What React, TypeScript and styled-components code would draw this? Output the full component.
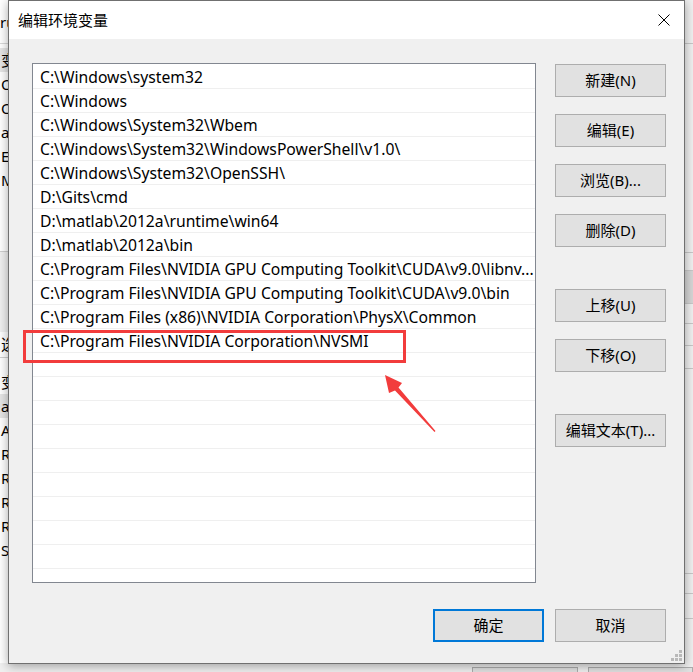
import React from "react";
import styled, { createGlobalStyle } from "styled-components";

const GlobalStyle = createGlobalStyle`
  html, body { margin: 0; padding: 0; }
  body {
    width: 693px; height: 672px; overflow: hidden; background: #f0f0f0;
    font-family: "Noto Sans", "Noto Sans CJK SC", sans-serif;
    -webkit-font-smoothing: antialiased;
  }
`;

const FONT = `"Noto Sans", "Noto Sans CJK SC", sans-serif`;

const Desktop = styled.div`
  position: relative;
  width: 693px;
  height: 672px;
  overflow: hidden;
  background: #f0f0f0;
  font-family: ${FONT};
`;

/* ---------- background window (only fringes visible) ---------- */
const BackWindow = styled.div`
  display: grid;
  grid-template-columns: 684px 9px;
  grid-template-rows: 663px 9px;
  width: 693px;
  height: 672px;
`;

const BackList = styled.div`
  display: flex;
  flex-direction: column;
  background: #ffffff;
  font-size: 15px;
  color: #000;
`;

const BackHeader = styled.div`
  height: 43px;
  border-bottom: 1px solid #d9d9d9;
  display: flex;
  align-items: center;
  padding-left: 0;
`;

const BackRow = styled.div<{ $shade?: boolean }>`
  height: 24px;
  line-height: 24px;
  padding-left: 1px;
  white-space: nowrap;
  background: ${(p) => (p.$shade ? "#e6e6e6" : "transparent")};
`;

const BackGap = styled.div<{ $h: number; $line?: boolean; $bg?: string }>`
  height: ${(p) => p.$h}px;
  border-bottom: ${(p) => (p.$line ? "1px solid #cfcfcf" : "none")};
  background: ${(p) => p.$bg || "transparent"};
`;

const BackSide = styled.div`
  display: flex;
  flex-direction: column;
  background: #f0f0f0;
`;

const SideBlock = styled.div<{ $h: number; $bg?: string; $line?: boolean }>`
  height: ${(p) => p.$h}px;
  background: ${(p) => p.$bg || "transparent"};
  border-bottom: ${(p) => (p.$line ? "1px solid #c8c8c8" : "none")};
`;

const BackFooter = styled.div`
  grid-column: 1 / span 2;
  display: flex;
  padding: 4px 0 0 472px;
  gap: 10px;
  background: #f0f0f0;
`;

const BackBtn = styled.div<{ $w: number }>`
  width: ${(p) => p.$w}px;
  height: 12px;
  border: 1px solid #adadad;
  border-bottom: none;
  background: #e1e1e1;
`;

/* ---------- dialog ---------- */
const Dialog = styled.div`
  position: absolute;
  left: 8px;
  top: 0;
  width: 677px;
  height: 664px;
  box-sizing: border-box;
  border: 1px solid #707070;
  background: #f0f0f0;
  box-shadow: 0 2px 10px rgba(0, 0, 0, 0.35);
  display: flex;
  flex-direction: column;
`;

const TitleBar = styled.div`
  height: 38px;
  flex: none;
  background: #ffffff;
  display: flex;
  align-items: center;
  justify-content: space-between;
  padding: 0 14px 0 9px;
`;

const Title = styled.span`
  font-size: 15px;
  color: #000;
  line-height: 1;
  margin-top: 1px;
`;

const Body = styled.div`
  flex: 1;
  display: flex;
  flex-direction: column;
  padding: 24px 18px 21px 23px;
`;

const Main = styled.div`
  display: flex;
  gap: 19px;
  height: 520px;
`;

const ListBox = styled.div`
  width: 504px;
  height: 520px;
  box-sizing: border-box;
  border: 1px solid #828790;
  background: #ffffff;
  overflow: hidden;
  padding-top: 1px;
`;

const Row = styled.div`
  height: 24px;
  box-sizing: border-box;
  border-bottom: 1px solid #efefef;
  padding: 1px 2px 0 7px;
  font-size: 15.7px;
  line-height: 22px;
  color: #000;
  white-space: nowrap;
  overflow: hidden;
`;

const ButtonColumn = styled.div`
  display: flex;
  flex-direction: column;
  padding-top: 1px;
`;

const Button = styled.button<{ $gap?: number; $default?: boolean }>`
  width: 111px;
  height: 33px;
  margin-top: ${(p) => p.$gap ?? 0}px;
  box-sizing: border-box;
  border: ${(p) => (p.$default ? "2px solid #0078d7" : "1px solid #adadad")};
  background: #e1e1e1;
  font-family: ${FONT};
  font-size: 15px;
  color: #000;
  padding: 0;
  display: flex;
  align-items: center;
  justify-content: center;
  line-height: 1;
`;

const Footer = styled.div`
  display: flex;
  justify-content: flex-end;
  gap: 11px;
  margin-top: 26px;
`;

const Grip = styled.svg`
  position: absolute;
  right: 1px;
  bottom: 1px;
`;

const Highlight = styled.div`
  position: absolute;
  left: 23px;
  top: 330px;
  width: 383px;
  height: 33px;
  box-sizing: border-box;
  border: 3px solid #f23c3c;
`;

const Arrow = styled.svg`
  position: absolute;
  left: 0;
  top: 0;
  pointer-events: none;
`;

const paths = [
  "C:\\Windows\\system32",
  "C:\\Windows",
  "C:\\Windows\\System32\\Wbem",
  "C:\\Windows\\System32\\WindowsPowerShell\\v1.0\\",
  "C:\\Windows\\System32\\OpenSSH\\",
  "D:\\Gits\\cmd",
  "D:\\matlab\\2012a\\runtime\\win64",
  "D:\\matlab\\2012a\\bin",
  "C:\\Program Files\\NVIDIA GPU Computing Toolkit\\CUDA\\v9.0\\libnv...",
  "C:\\Program Files\\NVIDIA GPU Computing Toolkit\\CUDA\\v9.0\\bin",
  "C:\\Program Files (x86)\\NVIDIA Corporation\\PhysX\\Common",
  "C:\\Program Files\\NVIDIA Corporation\\NVSMI",
];

const rows = [...paths, ...Array(10).fill("")];

export default function App() {
  return (
    <>
      <GlobalStyle />
      <Desktop>
        <BackWindow>
          <BackList>
            <BackHeader>ru</BackHeader>
            <BackGap $h={4} />
            <BackRow $shade>变</BackRow>
            <BackRow>Or</BackRow>
            <BackRow>Or</BackRow>
            <BackRow>a</BackRow>
            <BackRow>E</BackRow>
            <BackRow>M</BackRow>
            <BackGap $h={59} $line />
            <BackGap $h={80} $bg="#f0f0f0" />
            <BackRow>选</BackRow>
            <BackGap $h={1} $line />
            <BackGap $h={12} />
            <BackRow>变</BackRow>
            <BackRow $shade>a</BackRow>
            <BackRow>A</BackRow>
            <BackRow>R</BackRow>
            <BackRow>R</BackRow>
            <BackRow>R</BackRow>
            <BackRow>R</BackRow>
            <BackRow>S</BackRow>
          </BackList>
          <BackSide>
            <SideBlock $h={43} $line />
            <SideBlock $h={208} $line />
            <SideBlock $h={17} $line />
            <SideBlock $h={32} $bg="#d6d6d6" $line />
            <SideBlock $h={19} $line />
            <SideBlock $h={21} $line />
            <SideBlock $h={22} $line />
            <SideBlock $h={204} $line />
            <SideBlock $h={19} $line />
            <SideBlock $h={24} $line />
          </BackSide>
          <BackFooter>
            <BackBtn $w={111} />
            <BackBtn $w={111} />
          </BackFooter>
        </BackWindow>

        <Dialog>
          <TitleBar>
            <Title>编辑环境变量</Title>
            <svg width="12" height="12" viewBox="0 0 12 12">
              <path d="M0.5 0.5 L11.5 11.5 M11.5 0.5 L0.5 11.5" stroke="#000" strokeWidth="1" fill="none" />
            </svg>
          </TitleBar>
          <Body>
            <Main>
              <ListBox>
                {rows.map((r, i) => (
                  <Row key={i}>{r}</Row>
                ))}
              </ListBox>
              <ButtonColumn>
                <Button>新建(N)</Button>
                <Button $gap={17}>编辑(E)</Button>
                <Button $gap={17}>浏览(B)...</Button>
                <Button $gap={17}>删除(D)</Button>
                <Button $gap={42}>上移(U)</Button>
                <Button $gap={17}>下移(O)</Button>
                <Button $gap={42}>编辑文本(T)...</Button>
              </ButtonColumn>
            </Main>
            <Footer>
              <Button $default>确定</Button>
              <Button>取消</Button>
            </Footer>
          </Body>
          <Grip width="12" height="12" viewBox="0 0 12 12">
            <g fill="#b9b9b9">
              <rect x="8" y="0" width="3" height="3" />
              <rect x="4" y="4" width="3" height="3" />
              <rect x="8" y="4" width="3" height="3" />
              <rect x="0" y="8" width="3" height="3" />
              <rect x="4" y="8" width="3" height="3" />
              <rect x="8" y="8" width="3" height="3" />
            </g>
          </Grip>
        </Dialog>

        <Highlight />
        <Arrow width="693" height="672" viewBox="0 0 693 672">
          <polygon
            points="385,375 402,383 398.5,387.5 435.5,431 434.5,432 395,390.5 389,393"
            fill="#f23c3c"
          />
        </Arrow>
      </Desktop>
    </>
  );
}
